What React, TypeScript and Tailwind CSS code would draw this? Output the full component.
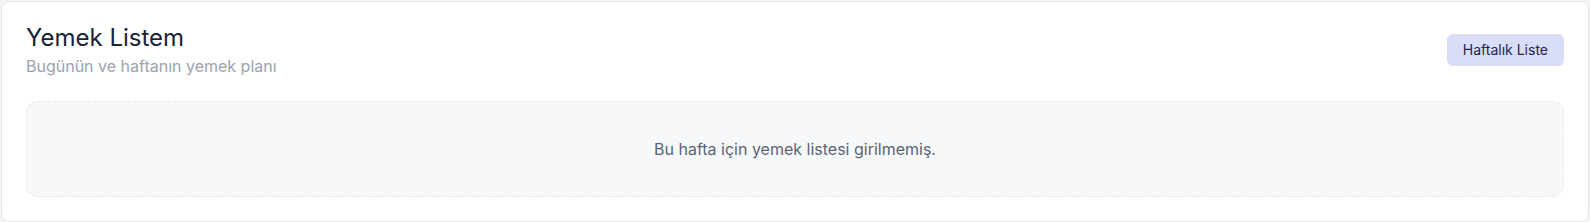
export default function App() {
  return (
    <div className="min-h-[222px] w-full bg-[#f3f4f6] p-px" style={{ fontFamily: "Inter, 'Noto Sans', sans-serif" }}>
      <div className="rounded-lg border border-[#e5e7eb] bg-white px-6 pt-5 pb-6">
        <div className="flex items-center justify-between">
          <div>
            <h2 className="text-2xl leading-8 font-normal text-[#1a2238]">Yemek Listem</h2>
            <p className="text-base leading-6 text-[#9ca3af]">Bugünün ve haftanın yemek planı</p>
          </div>
          <button className="rounded-md bg-[#d9ddf8] px-4 py-1.5 text-sm leading-5 text-[#1e2456]">Haftalık Liste</button>
        </div>
        <div className="mt-[23px] flex h-[96px] items-center justify-center rounded-xl border border-dashed border-[#e5e7eb] bg-[#f7f8fa]">
          <p className="text-base leading-6 text-[#5b6475]">Bu hafta için yemek listesi girilmemiş.</p>
        </div>
      </div>
    </div>
  );
}
